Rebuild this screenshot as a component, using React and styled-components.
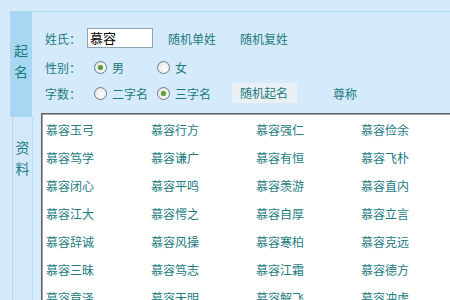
import React from "react";
import styled, { createGlobalStyle } from "styled-components";

const Global = createGlobalStyle`
  html, body { margin: 0; padding: 0; width: 450px; height: 300px; overflow: hidden; background: #d5eafb; }
  body { font-family: "Noto Sans CJK SC", "Noto Sans", sans-serif; font-size: 12px; color: #1d7b7f; }
`;

const Page = styled.div`
  width: 450px;
  height: 300px;
  box-sizing: border-box;
  padding: 11px 0 0 10px;
  display: flex;
  overflow: hidden;
`;

const TabColumn = styled.div`
  width: 23px;
  display: flex;
  flex-direction: column;
  flex-shrink: 0;
`;

const Tab = styled.div`
  display: flex;
  flex-direction: column;
  align-items: center;
  box-sizing: border-box;
  font-size: 14px;
  line-height: 21px;
  color: #1d7b7f;
  ${(p) =>
    p.$active
      ? `background: #a8d7f4; height: 106px; width: 22px; padding-top: 29px;`
      : `background: #d3e9fb; flex: 1; margin-left: 2px; width: 21px; border-left: 1px solid #b4dbf3; border-right: 1px solid #b4dbf3; padding-top: 20px;`}
`;

const Panel = styled.div`
  flex: 1;
  border-top: 1px solid #a9d6f3;
  display: flex;
  flex-direction: column;
  padding-left: 12px;
  min-width: 0;
  overflow: hidden;
`;

const Row = styled.div`
  display: flex;
  align-items: center;
  height: 20px;
  margin-top: ${(p) => p.$mt}px;
  white-space: nowrap;
`;

const Label = styled.span`
  width: 42px;
  flex-shrink: 0;
`;

const NameInput = styled.div`
  width: 66px;
  height: 20px;
  box-sizing: border-box;
  border: 1px solid #8ea4b8;
  background: #fff;
  color: #000;
  font-size: 13px;
  line-height: 18px;
  padding-left: 2px;
  margin-right: 15px;
`;

const LinkText = styled.span`
  margin-right: ${(p) => p.$mr || 0}px;
`;

const RadioItem = styled.label`
  display: flex;
  align-items: center;
  width: ${(p) => p.$w}px;
  margin-left: ${(p) => p.$ml || 0}px;
  flex-shrink: 0;
`;

const RadioCircle = styled.span`
  width: 13px;
  height: 13px;
  box-sizing: border-box;
  border-radius: 50%;
  border: 1px solid #6f7e8c;
  background: radial-gradient(circle at 60% 60%, #ffffff 0%, #eef0ee 50%, #d6dad6 100%);
  display: flex;
  align-items: center;
  justify-content: center;
  margin-right: 5px;
  &::after {
    content: "";
    width: 5px;
    height: 5px;
    border-radius: 50%;
    background: ${(p) => (p.$checked ? "#5e9f3c" : "transparent")};
    box-shadow: ${(p) => (p.$checked ? "0 0 1px #8fc26f" : "none")};
  }
`;

const Button = styled.span`
  background: #eaf0f4;
  height: 20px;
  line-height: 20px;
  padding: 0 9px 0 8px;
  margin-right: 36px;
`;

const ListBox = styled.div`
  margin-top: 10px;
  margin-left: -4px;
  width: 440px;
  flex: 1;
  background: #fff;
  border-top: 1px solid #5f5f5f;
  border-left: 1px solid #5f5f5f;
  box-shadow: inset 1px 1px 0 #a5a5a5;
  padding: 2px 0 0 4px;
  display: grid;
  grid-template-columns: repeat(4, 105px);
  grid-auto-rows: 28px;
  align-content: start;
`;

const Item = styled.span`
  line-height: 28px;
  color: #1d7b7f;
  white-space: nowrap;
`;

const names = [
  "慕容玉弓", "慕容行方", "慕容强仁", "慕容俭余",
  "慕容笃学", "慕容谦广", "慕容有恒", "慕容飞朴",
  "慕容闭心", "慕容平鸣", "慕容羡游", "慕容直内",
  "慕容江大", "慕容愕之", "慕容自厚", "慕容立言",
  "慕容辞诚", "慕容风操", "慕容寒柏", "慕容克远",
  "慕容三昧", "慕容笃志", "慕容江霜", "慕容德方",
  "慕容竟泽", "慕容天明", "慕容解飞", "慕容冲虚",
];

export default function App() {
  return (
    <>
      <Global />
      <Page>
        <TabColumn>
          <Tab $active>
            <span>起</span>
            <span>名</span>
          </Tab>
          <Tab>
            <span>资</span>
            <span>料</span>
          </Tab>
        </TabColumn>
        <Panel>
          <Row $mt={16}>
            <Label>姓氏：</Label>
            <NameInput>慕容</NameInput>
            <LinkText $mr={24}>随机单姓</LinkText>
            <LinkText>随机复姓</LinkText>
          </Row>
          <Row $mt={11}>
            <Label>性别：</Label>
            <RadioItem $w={63} $ml={7}>
              <RadioCircle $checked />男
            </RadioItem>
            <RadioItem $w={60}>
              <RadioCircle />女
            </RadioItem>
          </Row>
          <Row $mt={7}>
            <Label>字数：</Label>
            <RadioItem $w={63} $ml={7}>
              <RadioCircle />二字名
            </RadioItem>
            <RadioItem $w={75}>
              <RadioCircle $checked />三字名
            </RadioItem>
            <Button>随机起名</Button>
            <LinkText>尊称</LinkText>
          </Row>
          <ListBox>
            {names.map((n, i) => (
              <Item key={i}>{n}</Item>
            ))}
          </ListBox>
        </Panel>
      </Page>
    </>
  );
}
